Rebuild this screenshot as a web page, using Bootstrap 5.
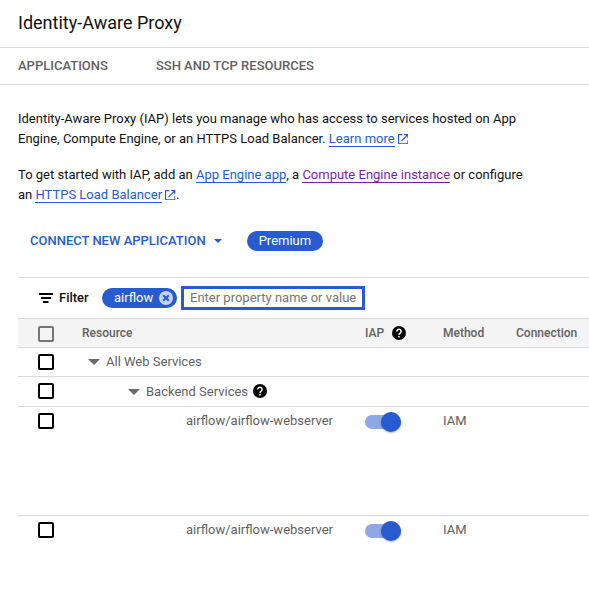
<!DOCTYPE html>
<html lang="en">
<head>
<meta charset="utf-8">
<meta name="viewport" content="width=device-width, initial-scale=1">
<title>Identity-Aware Proxy</title>
<link href="https://cdn.jsdelivr.net/npm/bootstrap@5.3.0/dist/css/bootstrap.min.css" rel="stylesheet">
<style>
  body { font-family: Roboto, "Liberation Sans", sans-serif; font-size: 13px; line-height: 20px; color: #111; height: 600px; }
  :root { --iap-blue: #275bcf; --iap-line: #dadada; }
  .page-head { height: 48px; padding: 0 18px 2px; border-bottom: 1px solid var(--iap-line); }
  .page-head h1 { font-size: 18px; line-height: 24px; font-weight: 400; color: #111; }
  .tab-strip { height: 37px; padding-left: 18px; gap: 48px; border-bottom: 1px solid var(--iap-line); }
  .tab-strip .nav-link { color: #616161; font-weight: 500; }
  .intro { padding: 24px 60px 0 18px; height: 146px; }
  .intro p { margin-bottom: 16px; }
  .doc-link { color: var(--iap-blue); text-decoration: none; border-bottom: 1px solid; }
  .doc-link.seen { color: #7b1fa2; }
  .ext { width: 10.5px; height: 10.5px; margin-left: 3px; margin-right: .5px; vertical-align: -1px; color: var(--iap-blue); }
  .actions { height: 46px; padding-left: 30px; gap: 25px; }
  .connect { color: var(--iap-blue); font-weight: 500; line-height: 20px; }
  .pill { height: 20px; border-radius: 10px; background: var(--iap-blue); color: #fff; font-weight: 400; font-size: 13px; line-height: 20px; }
  .pill-tag { padding: 0 12px; }
  .pill-filter { padding: 0 4px 0 12px; width: 75px; }
  .panel { margin-left: 18px; border-top: 1px solid var(--iap-line); }
  .filter-bar { height: 40px; padding-left: 21px; }
  .filter-name { font-weight: 500; width: 43px; margin-left: 6px; }
  .filter-input { width: 184px; height: 24px; border: 3px solid var(--iap-blue); border-radius: 0; font-size: 13px; padding: 0 6px 1px; line-height: 17px; margin-left: 4px; }
  .filter-input::placeholder { color: #757575; opacity: 1; }
  .grid-table { table-layout: fixed; width: 571px; border-top: 1px solid var(--iap-line); border-collapse: separate; border-spacing: 0; }
  .grid-table > :not(caption) > * > * { padding: 0; border-bottom: 1px solid var(--iap-line); color: #616161; }
  .grid-table th { height: 29px; background: #f4f4f4; font-size: 12px; font-weight: 500; line-height: 28px; vertical-align: top; }
  .grid-table td { height: 29px; line-height: 28px; }
  .grid-table tr.tall-row td { height: 109px; }
  .grid-table tbody tr:last-child td { border-bottom: 0; height: 84px; }
  .grid-table tr.mid-row td { height: 30px; line-height: 29px; }
  .grid-table .form-check-input { display: block; width: 16px; height: 16px; margin: 6px 0 0 20px; border: 2px solid #000; border-radius: 2px; background-color: #fff; }
  .grid-table th .form-check-input { border-color: #757575; background-color: transparent; margin-top: 7px; }
  .level-1 { padding-left: 6px; } .level-2 { padding-left: 46px; } .level-3 { padding-left: 104px; }
  .caret { width: 12px; height: 6px; margin-right: 6px; }
  .help { width: 14px; height: 14px; }
  .help-inline { margin: 0 0 1px 5px; }
  .toggle-track { width: 36px; height: 14px; margin-top: 8px; border-radius: 7px; background: #8ea8e6; }
  .toggle-knob { width: 20px; height: 20px; border-radius: 50%; background: var(--iap-blue); box-shadow: 0 1px 2px rgba(0,0,0,.3); }
</style>
</head>
<body class="bg-white overflow-hidden">
<svg class="d-none">
  <symbol id="i-ext" viewBox="0 0 11 11"><path d="M4.5.6H.6v9.8h9.8V6.5M6.5.6h3.9v3.9M10.2.8 3.6 7.4" fill="none" stroke="currentColor" stroke-width="1.2"/></symbol>
  <symbol id="i-help" viewBox="0 0 14 14"><circle cx="7" cy="7" r="7"/><path d="M4.9 5.4a2.1 2.1 0 1 1 3.5 1.5C7.6 7.6 7 7.8 7 8.9" fill="none" stroke="#fff" stroke-width="1.5"/><path d="M6.25 10h1.5v1.5h-1.5z" fill="#fff"/></symbol>
  <symbol id="i-caret" viewBox="0 0 12 6"><path d="M0 0h12L6 6z" fill="#6b6b6b"/></symbol>
</svg>
<header class="page-head d-flex align-items-center"><h1 class="m-0">Identity-Aware Proxy</h1></header>
<nav class="nav tab-strip align-items-center">
  <a class="nav-link p-0" href="#">APPLICATIONS</a>
  <a class="nav-link p-0" href="#">SSH AND TCP RESOURCES</a>
</nav>
<main>
  <section class="intro text-nowrap">
    <p>Identity-Aware Proxy (IAP) lets you manage who has access to services hosted on App<br>Engine, Compute Engine, or an HTTPS Load Balancer. <a class="doc-link" href="#">Learn more</a><svg class="ext"><use href="#i-ext"/></svg></p>
    <p>To get started with IAP, add an <a class="doc-link" href="#">App Engine app</a>, a <a class="doc-link seen" href="#">Compute Engine instance</a> or configure<br>an <a class="doc-link" href="#">HTTPS Load Balancer</a><svg class="ext"><use href="#i-ext"/></svg>.</p>
  </section>
  <div class="actions d-flex align-items-start">
    <a class="connect d-flex align-items-center text-decoration-none text-nowrap" href="#">CONNECT NEW APPLICATION<svg class="ms-2" width="8" height="4" viewBox="0 0 8 4"><path d="M0 0h8L4 4z" fill="currentColor"/></svg></a>
    <span class="badge pill pill-tag">Premium</span>
  </div>
  <section class="panel">
    <div class="filter-bar d-flex align-items-center">
      <svg width="14" height="10" viewBox="0 0 14 10"><path d="M0 0h14v2H0zM2 4h10v2H2zM4 8h5.5v2H4z"/></svg>
      <span class="filter-name">Filter</span>
      <span class="badge pill pill-filter d-flex align-items-center justify-content-between">airflow
        <svg width="14" height="14" viewBox="0 0 14 14"><circle cx="7" cy="7" r="7" fill="#c5d3f5"/><path d="m4.2 4.2 5.6 5.6m0-5.6L4.2 9.8" stroke="#275bcf" stroke-width="2"/></svg>
      </span>
      <input class="form-control filter-input shadow-none" type="text" placeholder="Enter property name or value">
    </div>
    <table class="table grid-table m-0 align-top">
      <colgroup><col style="width:64px"><col style="width:283px"><col style="width:78px"><col style="width:73px"><col style="width:73px"></colgroup>
      <thead><tr>
        <th><input class="form-check-input" type="checkbox"></th>
        <th>Resource</th>
        <th><div class="d-flex align-items-center gap-2">IAP<svg class="help"><use href="#i-help"/></svg></div></th>
        <th>Method</th>
        <th>Connection</th>
      </tr></thead>
      <tbody>
        <tr><td><input class="form-check-input" type="checkbox"></td><td><div class="level-1 d-flex align-items-center"><svg class="caret"><use href="#i-caret"/></svg>All Web Services</div></td><td></td><td></td><td></td></tr>
        <tr class="mid-row"><td><input class="form-check-input" type="checkbox"></td><td><div class="level-2 d-flex align-items-center"><svg class="caret"><use href="#i-caret"/></svg>Backend Services<svg class="help help-inline"><use href="#i-help"/></svg></div></td><td></td><td></td><td></td></tr>
        <tr class="tall-row"><td><input class="form-check-input" type="checkbox"></td><td><div class="level-3">airflow/airflow-webserver</div></td><td><div class="toggle-track d-flex align-items-center justify-content-end"><span class="toggle-knob"></span></div></td><td>IAM</td><td></td></tr>
        <tr><td><input class="form-check-input" type="checkbox"></td><td><div class="level-3">airflow/airflow-webserver</div></td><td><div class="toggle-track d-flex align-items-center justify-content-end"><span class="toggle-knob"></span></div></td><td>IAM</td><td></td></tr>
      </tbody>
    </table>
  </section>
</main>
<script src="https://cdn.jsdelivr.net/npm/bootstrap@5.3.0/dist/js/bootstrap.bundle.min.js"></script>
</body>
</html>
